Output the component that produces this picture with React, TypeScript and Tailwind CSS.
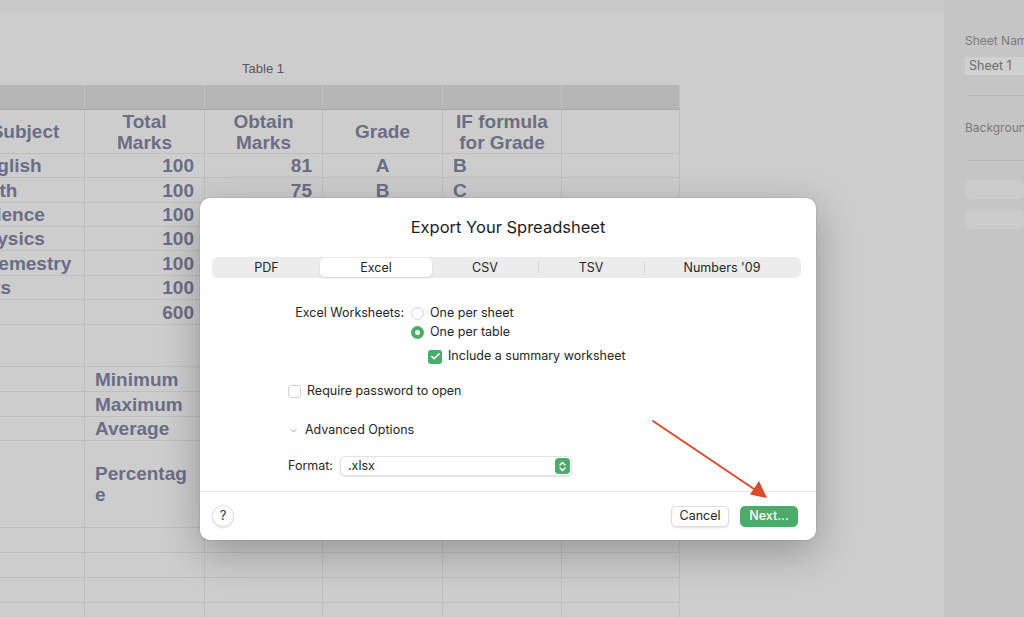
import { Check, ChevronDown } from 'lucide-react'

type Cell = { text?: string; align?: 'left' | 'right' | 'center' }

interface Row {
  h: string
  cells: Cell[]
}

const cols = ['w-[119px]', 'w-[120px]', 'w-[118px]', 'w-[120px]', 'w-[119px]', 'w-[118px]']

const blank = (n: number): Cell[] => Array.from({ length: n }, () => ({}))

const subj = (name: string, total: string, obt: string, grade: string, formula: string): Cell[] => [
  { text: name, align: 'left' },
  { text: total, align: 'right' },
  { text: obt, align: 'right' },
  { text: grade, align: 'center' },
  { text: formula, align: 'left' },
  {},
]

const rows: Row[] = [
  {
    h: 'h-[44px]',
    cells: [
      { text: 'Subject', align: 'center' },
      { text: 'Total\nMarks', align: 'center' },
      { text: 'Obtain\nMarks', align: 'center' },
      { text: 'Grade', align: 'center' },
      { text: 'IF formula\nfor Grade', align: 'center' },
      {},
    ],
  },
  { h: 'h-[24px]', cells: subj('English', '100', '81', 'A', 'B') },
  { h: 'h-[25px]', cells: subj('Math', '100', '75', 'B', 'C') },
  { h: 'h-[24px]', cells: subj('Science', '100', '90', 'A', 'A') },
  { h: 'h-[24px]', cells: subj('Physics', '100', '68', 'C', 'C') },
  { h: 'h-[25px]', cells: subj('Chemestry', '100', '72', 'B', 'B') },
  { h: 'h-[24px]', cells: subj('Arts', '100', '85', 'A', 'A') },
  { h: 'h-[25px]', cells: [{}, { text: '600', align: 'right' }, { text: '471', align: 'right' }, {}, {}, {}] },
  { h: 'h-[42px]', cells: blank(6) },
  { h: 'h-[25px]', cells: [{}, { text: 'Minimum', align: 'left' }, { text: '68', align: 'right' }, {}, {}, {}] },
  { h: 'h-[25px]', cells: [{}, { text: 'Maximum', align: 'left' }, { text: '90', align: 'right' }, {}, {}, {}] },
  { h: 'h-[24px]', cells: [{}, { text: 'Average', align: 'left' }, { text: '78.5', align: 'right' }, {}, {}, {}] },
  { h: 'h-[87px]', cells: [{}, { text: 'Percentag\ne', align: 'left' }, { text: '78.5', align: 'right' }, {}, {}, {}] },
  { h: 'h-[25px]', cells: blank(6) },
  { h: 'h-[25px]', cells: blank(6) },
  { h: 'h-[25px]', cells: blank(6) },
  { h: 'h-[25px]', cells: blank(6) },
]

const alignClass = {
  left: 'justify-start text-left pl-[10px]',
  right: 'justify-end text-right pr-[10px]',
  center: 'justify-center text-center',
}

function SheetTable() {
  return (
    <div className="-ml-[34px] w-[714px] font-['Liberation_Sans',Arial,sans-serif] font-bold text-[19px] leading-[21px] text-[#6b6d86]">
      <div className="flex h-[25px] bg-[#b5b5b5] border-b border-[#a9a9a9]">
        {cols.map((w, i) => (
          <div key={i} className={`${w} h-full border-r border-[#c0c0c0]`} />
        ))}
      </div>
      {rows.map((row, r) => (
        <div key={r} className={`flex ${row.h}`}>
          {row.cells.map((c, i) => (
            <div
              key={i}
              className={`${cols[i]} h-full flex items-center border-r border-b border-[#bfbfbf] whitespace-pre ${
                i === 0 && c.align === 'left' ? 'pl-[7px]' : alignClass[c.align ?? 'left']
              }`}
            >
              {c.text}
            </div>
          ))}
        </div>
      ))}
    </div>
  )
}

function Radio({ on }: { on?: boolean }) {
  return on ? (
    <span className="w-[13px] h-[13px] rounded-full bg-[#4caa6a] flex items-center justify-center">
      <span className="w-[5px] h-[5px] rounded-full bg-white" />
    </span>
  ) : (
    <span className="w-[13px] h-[13px] rounded-full border border-[#d4d4d4] bg-white shadow-[inset_0_1px_1px_rgba(0,0,0,0.05)]" />
  )
}

function Checkbox({ on }: { on?: boolean }) {
  return on ? (
    <span className="w-[14px] h-[14px] rounded-[3px] bg-[#4caa6a] flex items-center justify-center">
      <Check className="w-[11px] h-[11px] text-white" strokeWidth={3.5} />
    </span>
  ) : (
    <span className="w-[13px] h-[13px] rounded-[3px] border border-[#d0d0d0] bg-white" />
  )
}

function ExportDialog() {
  const tabs = [
    { label: 'PDF', w: 'w-[107px]' },
    { label: 'Excel', w: 'w-[112px]', active: true },
    { label: 'CSV', w: 'w-[106px]' },
    { label: 'TSV', w: 'w-[106px]', sep: true },
    { label: "Numbers '09", w: 'flex-1', sep: true },
  ]

  return (
    <div className="absolute left-[200px] top-[198px] w-[616px] h-[342px] bg-white rounded-[10px] shadow-[0_12px_40px_rgba(0,0,0,0.28),0_0_0_1px_rgba(0,0,0,0.06)] flex flex-col font-['Inter',sans-serif] text-[12.5px] text-[#262626]">
      <div className="flex-1 flex flex-col">
        <div className="pt-[19px] h-[39px] text-center text-[16.5px] leading-[20px] text-[#1d1d1d]">
          Export Your Spreadsheet
        </div>

        <div className="mt-[20px] ml-[12px] w-[589px] h-[21px] rounded-[6px] bg-[#ececec] flex items-center px-[1px]">
          {tabs.map((t) => (
            <div key={t.label} className={`${t.w} h-full flex items-center relative`}>
              {t.sep && <span className="absolute left-0 top-[5px] h-[11px] w-px bg-[#d6d6d6]" />}
              <div
                className={`w-full h-[19px] pt-px flex items-center justify-center rounded-[5px] ${
                  t.active ? 'bg-white shadow-[0_1px_2px_rgba(0,0,0,0.12)]' : ''
                }`}
              >
                {t.label}
              </div>
            </div>
          ))}
        </div>

        <div className="mt-[26px] flex">
          <div className="w-[204px] h-[19px] flex items-center justify-end">Excel Worksheets:</div>
          <div className="ml-[7px] flex flex-col">
            <div className="h-[19px] flex items-center gap-[6px]">
              <Radio />
              <span>One per sheet</span>
            </div>
            <div className="h-[19px] flex items-center gap-[6px]">
              <Radio on />
              <span>One per table</span>
            </div>
            <div className="mt-[5px] ml-[17px] h-[19px] flex items-center gap-[6px]">
              <Checkbox on />
              <span>Include a summary worksheet</span>
            </div>
          </div>
        </div>

        <div className="mt-[16px] ml-[88px] h-[19px] flex items-center gap-[6px]">
          <Checkbox />
          <span>Require password to open</span>
        </div>

        <div className="mt-[20px] ml-[88px] h-[19px] flex items-center gap-[6px]">
          <ChevronDown className="w-[11px] h-[11px] text-[#9a9a9a]" strokeWidth={1.8} />
          <span>Advanced Options</span>
        </div>

        <div className="mt-[16px] ml-[88px] flex items-center">
          <span className="w-[52px]">Format:</span>
          <div className="w-[232px] h-[20px] rounded-[5px] bg-white border border-[#e2e2e2] shadow-[0_1px_1.5px_rgba(0,0,0,0.12)] flex items-center justify-between pl-[7px] pr-[1px]">
            <span>.xlsx</span>
            <span className="w-[15px] h-[16px] rounded-[4px] bg-[#4caa6a] flex items-center justify-center">
              <svg width="7" height="11" viewBox="0 0 7 11" fill="none" stroke="white" strokeWidth="1.5" strokeLinecap="round" strokeLinejoin="round">
                <path d="M1 4 L3.5 1.5 L6 4" />
                <path d="M1 7 L3.5 9.5 L6 7" />
              </svg>
            </span>
          </div>
        </div>
      </div>

      <div className="h-[49px] border-t border-[#e6e6e6] flex items-center px-[12px]">
        <div className="w-[22px] h-[22px] rounded-full bg-white border border-[#e0e0e0] shadow-[0_1px_2px_rgba(0,0,0,0.12)] flex items-center justify-center text-[13px] text-[#333]">
          ?
        </div>
        <div className="flex-1" />
        <div className="w-[58px] h-[21px] rounded-[5px] bg-white border border-[#dcdcdc] shadow-[0_1px_1.5px_rgba(0,0,0,0.1)] flex items-center justify-center">
          Cancel
        </div>
        <div className="ml-[11px] mr-[6px] w-[58px] h-[21px] rounded-[5px] bg-[#4caa6a] text-white font-medium flex items-center justify-center">
          Next...
        </div>
      </div>
    </div>
  )
}

function Arrow() {
  return (
    <svg className="absolute left-0 top-0 pointer-events-none" width="1024" height="617">
      <line x1="653" y1="421" x2="757" y2="491" stroke="#dc4a2c" strokeWidth="2" strokeLinecap="round" />
      <polygon points="767,498 750,494.5 759,481" fill="#dc4a2c" />
    </svg>
  )
}

function Sidebar() {
  return (
    <aside className="w-[80px] bg-[#c5c5c5] pl-[21px] pt-[33px] font-['Inter',sans-serif] text-[12px] text-[#7a7a7a] whitespace-nowrap overflow-hidden">
      <div className="h-[15px] leading-[15px]">Sheet Name</div>
      <div className="mt-[9px] h-[18px] bg-[#d0d0d0] pl-[4px] leading-[18px] text-[12.5px] text-[#6e6e6e]">Sheet 1</div>
      <div className="mt-[20px] ml-[3px] h-px bg-[#b8b8b8]" />
      <div className="mt-[24px] h-[15px] leading-[15px]">Background</div>
      <div className="mt-[25px] ml-[3px] h-px bg-[#b8b8b8]" />
      <div className="mt-[19px] h-[19px] rounded-[5px] bg-[#cbcbcb]" />
      <div className="mt-[11px] h-[19px] rounded-[5px] bg-[#cbcbcb]" />
    </aside>
  )
}

export default function App() {
  return (
    <div className="relative w-[1024px] h-[617px] overflow-hidden flex bg-[#cdcdcd]">
      <main className="w-[944px] h-full flex flex-col overflow-hidden">
        <div className="h-[13px] shrink-0 bg-[#c8c8c8]" />
        <div className="pt-[48px] mb-[8px] w-[526px] h-[64px] text-center font-['Liberation_Sans',Arial,sans-serif] text-[13px] leading-[16px] text-[#585858]">
          Table 1
        </div>
        <SheetTable />
      </main>
      <Sidebar />
      <ExportDialog />
      <Arrow />
    </div>
  )
}
